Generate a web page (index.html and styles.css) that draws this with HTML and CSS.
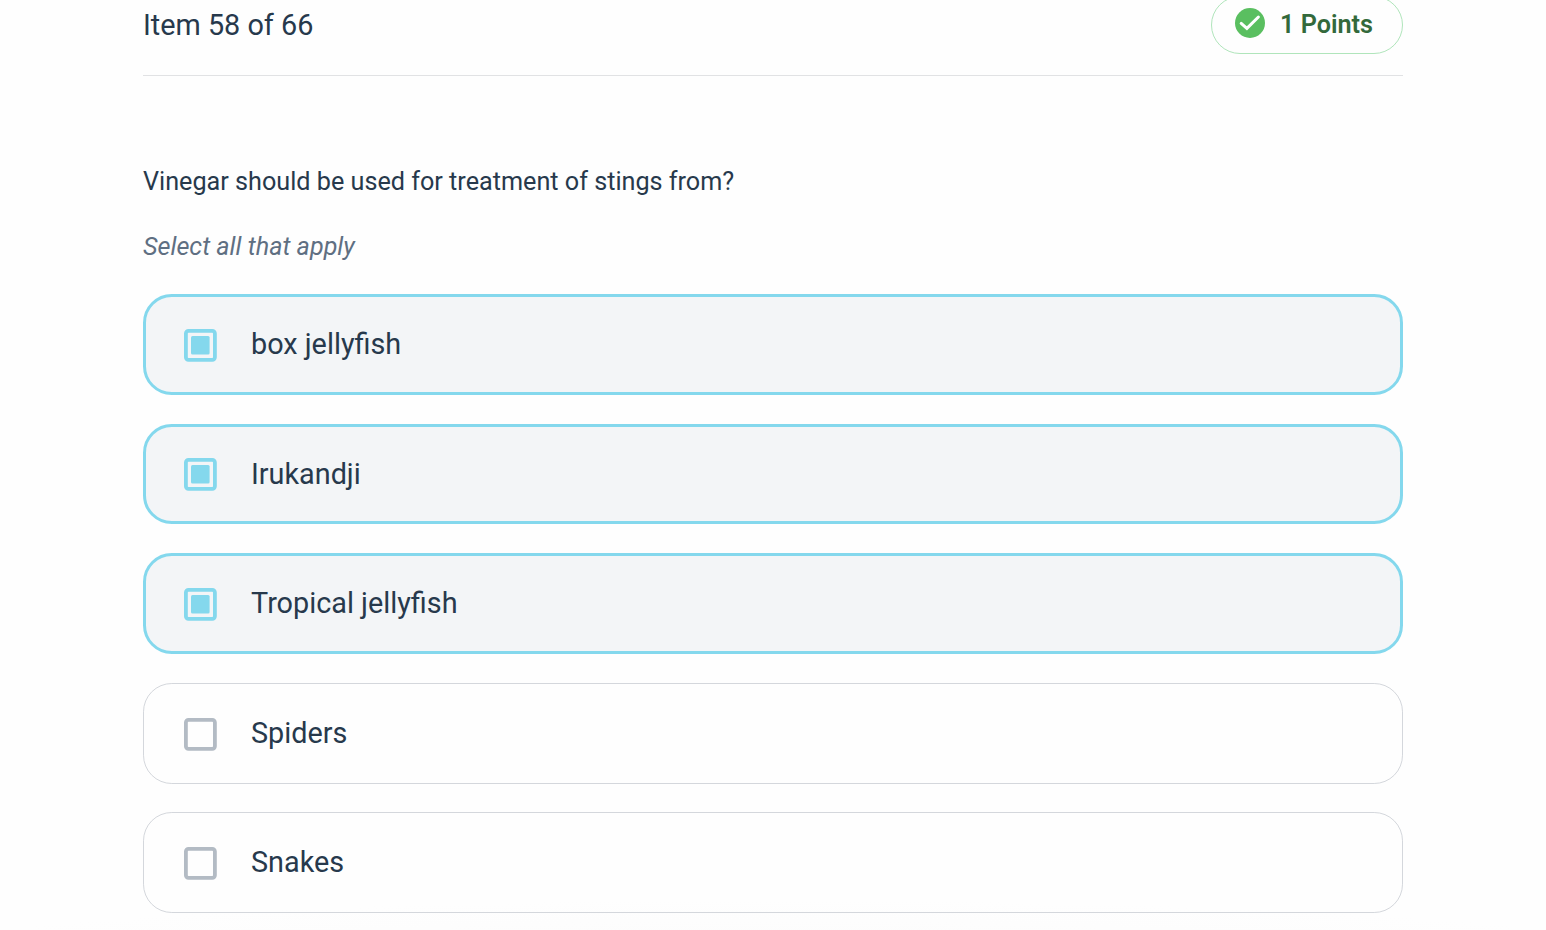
FILE: index.html
```html
<!DOCTYPE html>
<html lang="en">
<head>
    <meta charset="UTF-8">
    <meta name="viewport" content="width=device-width, initial-scale=1.0">
    <title>Quiz</title>
    <link rel="stylesheet" href="styles.css">
</head>
<body>
    <div id="quiz">
        <!-- item number and points -->
        <div class="quiz-header">
            <h1 class="item-count">Item 58 of 66</h1>
            <div class="points">
                <svg class="points-icon" viewBox="0 0 30 30">
                    <circle cx="15" cy="15" r="15" fill="#5abf60"/>
                    <path d="M6.2 15.4 L11.9 20.4 L23.4 9" fill="none" stroke="#fff" stroke-width="3" stroke-linecap="round" stroke-linejoin="miter"/>
                </svg>
                <span class="points-text">1 Points</span>
            </div>
        </div>

        <p class="question">Vinegar should be used for treatment of stings from?</p>
        <p class="hint">Select all that apply</p>

        <!-- answers -->
        <div class="options">
            <div class="option selected">
                <svg class="checkbox" viewBox="0 0 33 33"><rect class="box" x="1.9" y="1.9" width="29" height="29" rx="2.6"/><rect class="mark" x="7" y="7" width="18.6" height="18.4" rx="1.5"/></svg>
                <span>box jellyfish</span>
            </div>
            <div class="option selected">
                <svg class="checkbox" viewBox="0 0 33 33"><rect class="box" x="1.9" y="1.9" width="29" height="29" rx="2.6"/><rect class="mark" x="7" y="7" width="18.6" height="18.4" rx="1.5"/></svg>
                <span>Irukandji</span>
            </div>
            <div class="option selected">
                <svg class="checkbox" viewBox="0 0 33 33"><rect class="box" x="1.9" y="1.9" width="29" height="29" rx="2.6"/><rect class="mark" x="7" y="7" width="18.6" height="18.4" rx="1.5"/></svg>
                <span>Tropical jellyfish</span>
            </div>
            <div class="option">
                <svg class="checkbox" viewBox="0 0 33 33"><rect class="box" x="1.9" y="1.9" width="29" height="29" rx="2.6"/></svg>
                <span>Spiders</span>
            </div>
            <div class="option">
                <svg class="checkbox" viewBox="0 0 33 33"><rect class="box" x="1.9" y="1.9" width="29" height="29" rx="2.6"/></svg>
                <span>Snakes</span>
            </div>
        </div>
    </div>
</body>
</html>
```
FILE: styles.css
```css
* {
    box-sizing: border-box;
}
body {
    margin: 0;
    height: 930px;
    overflow: hidden;
    /* very light shade at the bottom of the page */
    background: radial-gradient(ellipse 900px 60px at 50% 960px, #fbfbfb, #fefefe);
    color: #27394c;
    font-family: Roboto, "Liberation Sans", sans-serif;
}
#quiz {
    width: 1260px;
    margin-left: 143px;
}
.quiz-header {
    display: flex;
    justify-content: space-between;
    height: 76px;
    border-bottom: 1px solid #e1e2e4;
}
.item-count {
    margin: 8px 0 0;
    font-size: 28.8px;
    line-height: 34px;
    font-weight: 400;
}
.points {
    display: flex;
    align-items: center;
    width: 192px;
    height: 58px;
    margin-top: -4px;
    padding-left: 23px;
    border: 1px solid #b0e5bb;
    border-radius: 29px;
}
.points-icon {
    width: 30px;
    height: 30px;
    margin: -5px 15px 0 0;
}
.points-text {
    margin-top: -2px;
    color: #33693b;
    font-size: 25.2px;
    font-weight: 600;
    white-space: nowrap;
}
.question {
    margin: 91px 0 0;
    font-size: 25.2px;
    line-height: 30px;
}
.hint {
    margin: 35px 0 0;
    color: #5f6f82;
    font-size: 25.2px;
    line-height: 30px;
    font-style: italic;
}
.options {
    display: flex;
    flex-direction: column;
    gap: 28.8px;
    margin-top: 32px;
}
.option {
    display: flex;
    align-items: center;
    height: 100.8px;
    padding-left: 40px;
    border: 1px solid #d4d7dc;
    border-radius: 28.8px;
    font-size: 28.8px;
    line-height: 34px;
}
.option span {
    margin-bottom: 0.8px;
}
.option.selected {
    padding-left: 38px;
    border: 3px solid #84d8ed;
    background-color: #f3f5f7;
}
.checkbox {
    width: 33px;
    height: 33px;
    margin: 1.7px 34px 0 0;
}
.box {
    fill: none;
    stroke: #b3bbc4;
    stroke-width: 3.8;
}
.selected .box {
    stroke: #84d8ed;
}
.mark {
    fill: #84d8ed;
}
```
